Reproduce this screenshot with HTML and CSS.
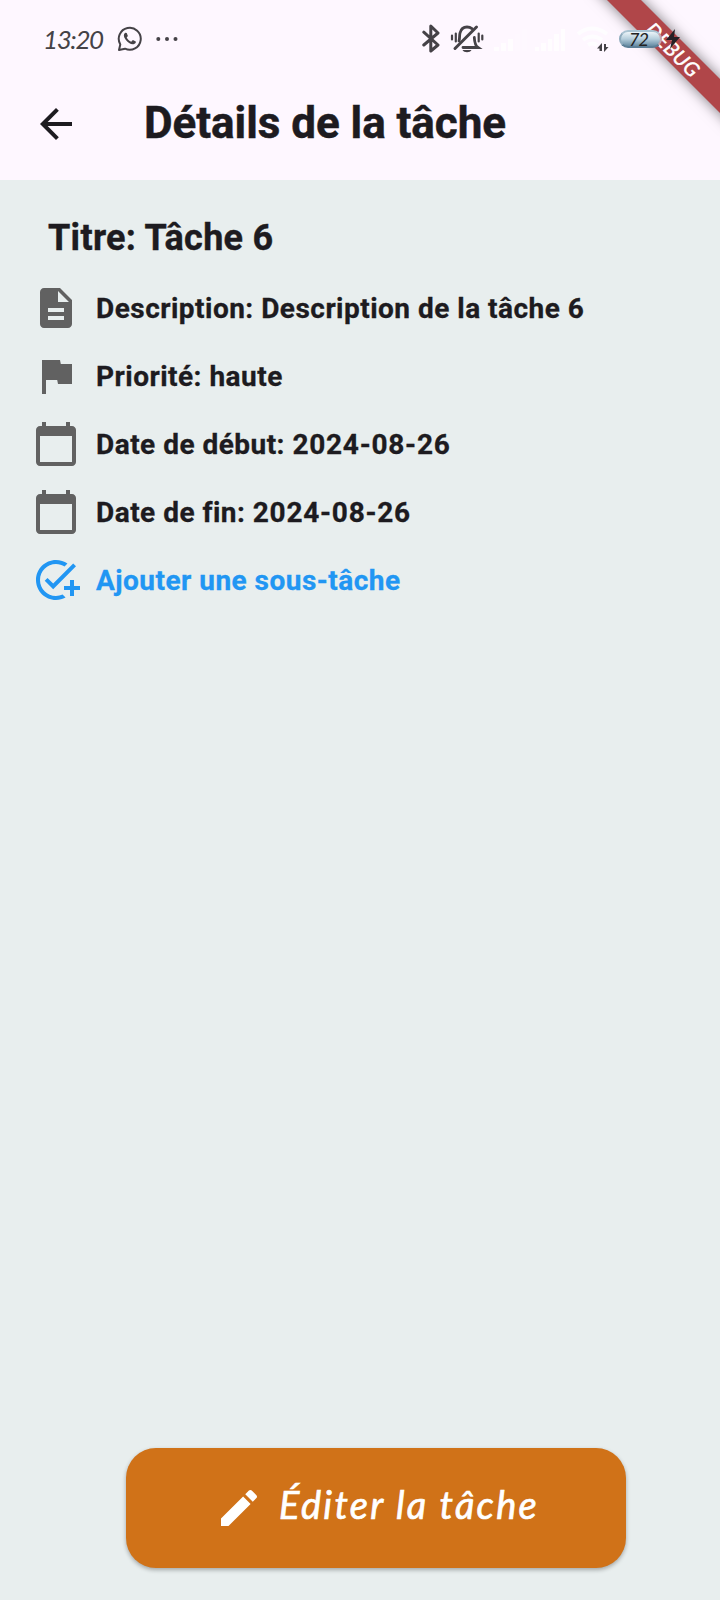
FILE: index.html
```html
<!DOCTYPE html>
<html lang="fr">
<head>
<meta charset="utf-8">
<title>Détails de la tâche</title>
<link rel="stylesheet" href="styles.css">
</head>
<body>
<div class="screen">
  <div class="ribbon"><span class="ribbon-text">DEBUG</span></div>
  <header class="header">
    <div class="status">
      <span class="clock">13:20</span>
      <svg class="whatsapp" width="26" height="26" viewBox="0 0 26 26"><path d="M2 24l1.300-5.600A11 11 0 1 1 8 22.700z" fill="none" stroke="#454247" stroke-width="2" stroke-linejoin="round"/><path d="M8.200 6.700c-2 1.500-1.700 4 .3 6.800 2.300 3.100 5.500 5.200 8 4.800 1.600-.3 2.600-1.500 2.300-2.700l-2.900-1.500-1.700 1.700c-2-.9-3.700-2.400-4.500-4.200l1.200-1.600-1.200-3z" fill="#454247"/></svg>
      <svg class="dots" width="22" height="6" viewBox="0 0 22 6"><g fill="#454247"><circle cx="2.300" cy="3" r="2"/><circle cx="11" cy="3" r="2"/><circle cx="19.500" cy="3" r="2"/></g></svg>
      <svg class="bluetooth" width="18" height="30" viewBox="0 0 18 30"><path d="M1.800 8.200L16 21l-7.200 6V2L16 9 1.800 21" fill="none" stroke="#454247" stroke-width="3" stroke-linejoin="round" stroke-linecap="round"/></svg>
      <svg class="mute" width="34" height="30" viewBox="0 0 34 30"><g fill="none" stroke="#454247" stroke-width="2.800" stroke-linecap="round"><path d="M9 17c.8-2 .3-5 1-8C11 5 14 3 17 3c2 0 3.500.5 5 1.700"/><path d="M5 24.500L26.500 3" stroke-width="3"/><path d="M13 23.500h15c-3-2-3.500-6-3.700-10"/><path d="M2 11.500v4M5.800 9.500v8M28.700 9.500v8M32.300 11.500v4" stroke-width="2.200"/></g><path d="M12.500 26h9c-1.500 3-7.500 3-9 0z" fill="#454247"/></svg>
      <svg class="signal signal-a" width="36" height="26" viewBox="0 0 36 26"><g fill="#fff"><path opacity=".7" d="M2 21h5v4H2zM9 17h5v8H9zM16 13h5v12h-5z"/><path opacity=".15" d="M23 8h5v17h-5zM30 3h5v22h-5z"/></g></svg>
      <svg class="signal signal-b" width="32" height="26" viewBox="0 0 32 26"><path opacity=".75" fill="#fff" d="M1 21h4v4H1zM7 17h5v8H7zM14 13h4v12h-4zM20 8h5v17h-5zM27 3h4v22h-4z"/></svg>
      <svg class="wifi" width="34" height="28" viewBox="0 0 34 28"><g fill="none" stroke="#fff" stroke-width="4" opacity=".8"><path d="M2 8q14-11 29 0M7 14q9.500-7 19 0"/><path d="M12 19q4.500-3 9 0"/></g><path d="M26 17v8h-2.500v-2.500H21L25 18zM28 26v-8h2v3h2.500L29 25z" fill="#454247"/></svg>
      <div class="battery"><span class="charge">72</span></div>
      <svg class="bolt" width="14" height="20" viewBox="0 0 14 20"><path d="M9 0L0 11h6L4 20 14 8H8z" fill="#252024"/></svg>
    </div>
    <div class="toolbar">
      <svg width="48" height="48" viewBox="0 0 24 24"><path fill="#1d1b20" d="M20 11H7.830l5.590-5.590L12 4l-8 8 8 8 1.410-1.410L7.830 13H20v-2z"/></svg>
      <h1 class="title">Détails de la tâche</h1>
    </div>
  </header>
  <main class="content">
    <h2 class="task-title">Titre: Tâche 6</h2>
    <div class="row"><svg class="icon" viewBox="0 0 24 24"><path d="M14 2H6c-1.100 0-1.990.9-1.990 2L4 20c0 1.100.89 2 1.990 2H18c1.100 0 2-.9 2-2V8l-6-6zm2 16H8v-2h8v2zm0-4H8v-2h8v2zm-3-5V3.500L18.500 9H13z"/></svg><span class="label">Description: Description de la tâche 6</span></div>
    <div class="row"><svg class="icon" viewBox="0 0 24 24"><path d="M14.400 6L14 4H5v17h2v-7h5.600l.4 2h7V6z"/></svg><span class="label">Priorité: haute</span></div>
    <div class="row"><svg class="icon" viewBox="0 0 24 24"><path d="M20 3h-1V1h-2v2H7V1H5v2H4c-1.100 0-2 .9-2 2v16c0 1.100.9 2 2 2h16c1.100 0 2-.9 2-2V5c0-1.100-.9-2-2-2zm0 18H4V8h16v13z"/></svg><span class="label">Date de début: <span class="date">2024-08-26</span></span></div>
    <div class="row"><svg class="icon" viewBox="0 0 24 24"><path d="M20 3h-1V1h-2v2H7V1H5v2H4c-1.100 0-2 .9-2 2v16c0 1.100.9 2 2 2h16c1.100 0 2-.9 2-2V5c0-1.100-.9-2-2-2zm0 18H4V8h16v13z"/></svg><span class="label">Date de fin: <span class="date">2024-08-26</span></span></div>
    <div class="row add"><svg class="icon" viewBox="0 0 24 24"><path d="M22 5.180L10.590 16.600l-4.240-4.240 1.410-1.410 2.830 2.830 10-10L22 5.180zM12 20c-4.410 0-8-3.590-8-8s3.590-8 8-8c1.570 0 3.040.46 4.280 1.250l1.450-1.450C16.100 2.670 14.130 2 12 2 6.480 2 2 6.480 2 12s4.480 10 10 10c1.730 0 3.360-.44 4.780-1.220l-1.500-1.500c-1 .46-2.110.72-3.280.72zm7-5h-3v2h3v3h2v-3h3v-2h-3v-3h-2v3z"/></svg><span class="label">Ajouter une sous-tâche</span></div>
  </main>
  <button class="edit" type="button"><svg width="48" height="48" viewBox="0 0 24 24"><path fill="#fff" d="M3 17.250V21h3.750L17.810 9.940l-3.750-3.750L3 17.250zM20.710 7.040c.39-.39.39-1.020 0-1.410l-2.340-2.340c-.39-.39-1.020-.39-1.410 0l-1.830 1.830 3.750 3.750 1.830-1.830z"/></svg><span class="edit-text">Éditer la tâche</span></button>
</div>
</body>
</html>
```
FILE: styles.css
```css
* { box-sizing: border-box; }
body { margin: 0; font-family: Roboto, sans-serif; }
.screen {
  position: relative;
  display: flex;
  flex-direction: column;
  width: 720px;
  height: 1600px;
  overflow: hidden;
  background: #e8eeee;
  color: #1d1b20;
}
.header { height: 180px; background: #fef7ff; }
.status {
  position: relative;
  z-index: 2;
  display: flex;
  align-items: center;
  height: 68px;
  padding: 10px 0 0 43px;
}
.status > * { flex: none; }
.clock {
  width: 61px;
  font: italic 26px/30px Lato, sans-serif;
  letter-spacing: -1.4px;
  color: #454247;
  white-space: nowrap;
}
.whatsapp { margin-left: 13px; }
.dots { margin-left: 13px; }
.bluetooth { margin-left: 244px; }
.mute { margin-left: 10px; }
.signal-a { margin-left: 8px; }
.signal-b { margin-left: 6px; }
.wifi { margin: 2px 0 0 10px; }
.battery {
  display: flex;
  align-items: center;
  justify-content: center;
  width: 43px;
  height: 18px;
  margin-left: 9px;
  padding-right: 4px;
  border: 2px solid;
  border-color: #a9c3d2 #c6a4ae #5c7f97 #8eabbd;
  border-radius: 9px;
  background: linear-gradient(#edf5f9, #b4cddb 50%, #668ba3);
}
.charge { font: italic 18px/16px Lato, sans-serif; letter-spacing: -1px; color: #222; }
.bolt { margin-left: 4px; }
.toolbar {
  display: flex;
  align-items: center;
  height: 112px;
  padding-left: 32px;
  gap: 64px;
}
.title {
  margin: 0 0 3px;
  font-size: 44px;
  line-height: 56px;
  font-weight: 700;
  letter-spacing: -0.05px;
  -webkit-text-stroke: 0.5px currentColor;
  white-space: nowrap;
}
.content { flex: 1; padding: 34px 32px 0; }
.task-title {
  margin: 0 0 22px;
  padding-left: 16px;
  font-size: 36px;
  line-height: 48px;
  font-weight: 700;
  letter-spacing: 0.3px;
  -webkit-text-stroke: 0.4px currentColor;
}
.row { display: flex; align-items: center; gap: 16px; height: 48px; margin-bottom: 20px; }
.icon { width: 48px; height: 48px; fill: #616161; }
.label {
  padding-top: 2px;
  font-size: 28px;
  line-height: 40px;
  font-weight: 700;
  letter-spacing: 0.48px;
  -webkit-text-stroke: 0.3px currentColor;
  white-space: nowrap;
}
.date { letter-spacing: 0.75px; }
.add { color: #2196f3; }
.add .icon { fill: #2196f3; }
.edit {
  display: flex;
  align-items: center;
  width: 500px;
  height: 120px;
  margin: 0 0 32px 126px;
  padding: 0 0 0 89px;
  gap: 16px;
  border: 0;
  border-radius: 30px;
  background: #d07218;
  box-shadow: 0 2px 4px rgba(0, 0, 0, 0.3);
  color: #fff;
}
.edit-text {
  margin-bottom: 9px;
  font: italic 38px/48px Lato, sans-serif;
  letter-spacing: 2.3px;
  -webkit-text-stroke: 0.7px #fff;
  white-space: nowrap;
}
/* Diagonal corner banner */
.ribbon {
  position: absolute;
  z-index: 1;
  left: 572px;
  top: 36px;
  width: 200px;
  height: 24px;
  display: flex;
  align-items: center;
  justify-content: center;
  transform: rotate(45deg);
  background: #b04649;
  box-shadow: 0 0 14px rgba(0, 0, 0, 0.5);
}
.ribbon-text {
  padding-left: 4px;
  font: italic 20px/24px Lato, sans-serif;
  letter-spacing: 0.6px;
  -webkit-text-stroke: 0.5px #fff;
  color: #fff;
}
```
